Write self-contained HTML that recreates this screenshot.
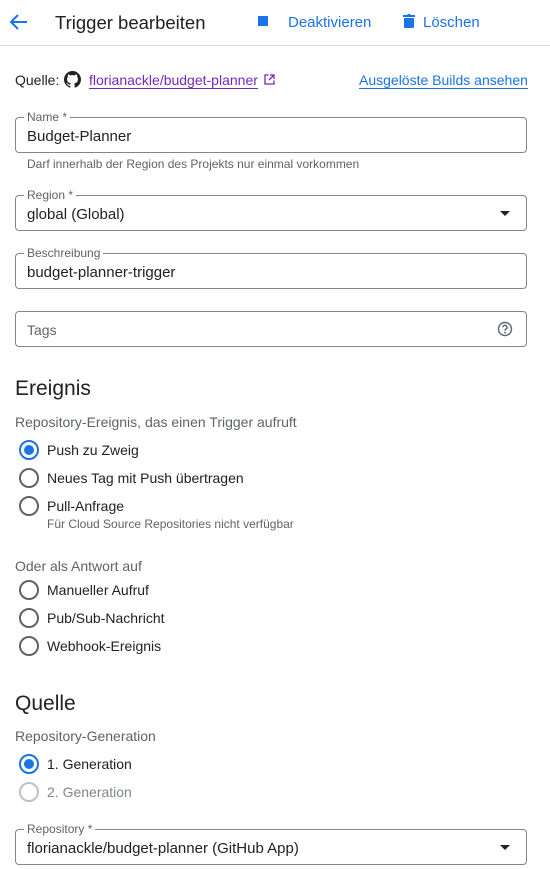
<!DOCTYPE html>
<html><head><meta charset="utf-8"><style>
*{box-sizing:border-box;margin:0;padding:0}
body{width:550px;height:869px;background:#fff;font-family:"Liberation Sans",Roboto,sans-serif;color:#202124;position:relative;overflow:hidden}
.a{position:absolute;white-space:nowrap}
.box{position:absolute;left:15px;width:512px;height:36px;border:1px solid #80868b;border-radius:4px}
.lbl{position:absolute;left:8px;top:-8px;background:#fff;padding:0 3px;font-size:12px;color:#5f6368;line-height:14px}
.val{position:absolute;left:11px;top:10px;font-size:15px;color:#202124}
.dd{position:absolute;right:16px;top:15px;width:0;height:0;border-left:5px solid transparent;border-right:5px solid transparent;border-top:5px solid #202124}
.r{position:absolute;left:19px;width:20px;height:20px;border:2px solid #5f6368;border-radius:50%}
.r.on{border-color:#1a73e8}
.r.on::after{content:"";position:absolute;left:3px;top:3px;width:10px;height:10px;border-radius:50%;background:#1a73e8}
.r.dis{border-color:#bdc1c6}
.rt{position:absolute;left:47px;font-size:14px;color:#202124}
.h{font-size:21px;color:#202124}
.s{font-size:14px;color:#5f6368}
</style></head><body>
<svg class="a" style="left:9px;top:13px" width="20" height="18" viewBox="0 0 20 18"><path d="M18 9H3M9 2L2 9l7 7" fill="none" stroke="#1a73e8" stroke-width="2"/></svg>
<div class="a" style="left:55px;top:12px;font-size:18.5px">Trigger bearbeiten</div>
<div class="a" style="left:258px;top:16px;width:10px;height:10px;background:#1a73e8"></div>
<div class="a" style="left:288px;top:14px;font-size:15px;color:#1a73e8">Deaktivieren</div>
<svg class="a" style="left:403px;top:14px" width="12" height="14" viewBox="0 0 12 14"><path d="M0 1h4l1-1h2l1 1h4v2H0zM1 4h10v9a1 1 0 0 1-1 1H2a1 1 0 0 1-1-1z" fill="#1a73e8"/></svg>
<div class="a" style="left:423px;top:14px;font-size:15px;color:#1a73e8">Löschen</div>
<div class="a" style="left:0;top:45px;width:550px;height:1px;background:#dadce0"></div>

<div class="a" style="left:15px;top:72px;font-size:14px">Quelle:</div>
<svg class="a" style="left:64px;top:71px" width="17" height="17" viewBox="0 0 16 16"><path fill="#202124" d="M8 0C3.58 0 0 3.58 0 8c0 3.54 2.29 6.53 5.47 7.59.4.07.55-.17.55-.38v-1.33c-2.23.48-2.7-1.07-2.7-1.07-.36-.92-.89-1.17-.89-1.17-.73-.5.06-.49.06-.49.8.06 1.23.83 1.23.83.72 1.22 1.87.87 2.33.66.07-.52.28-.87.5-1.07-1.78-.2-3.64-.89-3.64-3.95 0-.87.31-1.59.82-2.15-.08-.2-.36-1.02.08-2.12 0 0 .67-.21 2.2.82a7.6 7.6 0 0 1 4 0c1.53-1.04 2.2-.82 2.2-.82.44 1.1.16 1.92.08 2.12.51.56.82 1.27.82 2.15 0 3.07-1.87 3.75-3.65 3.95.29.25.54.73.54 1.48v2.2c0 .21.15.46.55.38A8 8 0 0 0 16 8c0-4.42-3.58-8-8-8z"/></svg>
<div class="a" style="left:89px;top:72px;font-size:14px;color:#7627bb;border-bottom:1px solid #7627bb;line-height:16px">florianackle/budget-planner</div>
<svg class="a" style="left:264px;top:74px" width="11" height="11" viewBox="0 0 11 11"><path d="M4.5 1H1v9h9V6.5M6 1h4v4M10 1L5 6" fill="none" stroke="#7627bb" stroke-width="1.3"/></svg>
<div class="a" style="left:359px;top:72px;font-size:14px;color:#1a73e8;border-bottom:1px solid #1a73e8;line-height:16px">Ausgelöste Builds ansehen</div>

<div class="box" style="top:117px"><span class="lbl">Name *</span><span class="val">Budget-Planner</span></div>
<div class="a" style="left:27px;top:157px;font-size:12px;color:#5f6368">Darf innerhalb der Region des Projekts nur einmal vorkommen</div>
<div class="box" style="top:195px"><span class="lbl">Region *</span><span class="val">global (Global)</span><span class="dd"></span></div>
<div class="box" style="top:253px"><span class="lbl">Beschreibung</span><span class="val">budget-planner-trigger</span></div>
<div class="box" style="top:311px"><span class="val" style="color:#5f6368;font-size:14px">Tags</span>
<svg style="position:absolute;right:13px;top:9px" width="16" height="16" viewBox="0 0 16 16"><circle cx="8" cy="8" r="6.5" fill="none" stroke="#5f6368" stroke-width="1.4"/><path d="M6 6.3a2 2 0 1 1 2.6 1.9c-.4.2-.6.5-.6.9v.6" fill="none" stroke="#5f6368" stroke-width="1.4"/><circle cx="8" cy="11.6" r=".9" fill="#5f6368"/></svg></div>

<div class="a h" style="left:15px;top:377px">Ereignis</div>
<div class="a s" style="left:15px;top:414px">Repository-Ereignis, das einen Trigger aufruft</div>
<div class="r on" style="top:440px"></div><div class="rt" style="top:442px">Push zu Zweig</div>
<div class="r" style="top:468px"></div><div class="rt" style="top:470px">Neues Tag mit Push übertragen</div>
<div class="r" style="top:496px"></div><div class="rt" style="top:498px">Pull-Anfrage</div>
<div class="a" style="left:47px;top:517px;font-size:12px;color:#5f6368">Für Cloud Source Repositories nicht verfügbar</div>
<div class="a s" style="left:15px;top:558px">Oder als Antwort auf</div>
<div class="r" style="top:580px"></div><div class="rt" style="top:582px">Manueller Aufruf</div>
<div class="r" style="top:608px"></div><div class="rt" style="top:610px">Pub/Sub-Nachricht</div>
<div class="r" style="top:636px"></div><div class="rt" style="top:638px">Webhook-Ereignis</div>

<div class="a h" style="left:15px;top:692px">Quelle</div>
<div class="a s" style="left:15px;top:728px">Repository-Generation</div>
<div class="r on" style="top:754px"></div><div class="rt" style="top:756px">1. Generation</div>
<div class="r dis" style="top:782px"></div><div class="rt" style="top:784px;color:#80868b">2. Generation</div>
<div class="box" style="top:829px"><span class="lbl">Repository *</span><span class="val">florianackle/budget-planner (GitHub App)</span><span class="dd"></span></div>
</body></html>
